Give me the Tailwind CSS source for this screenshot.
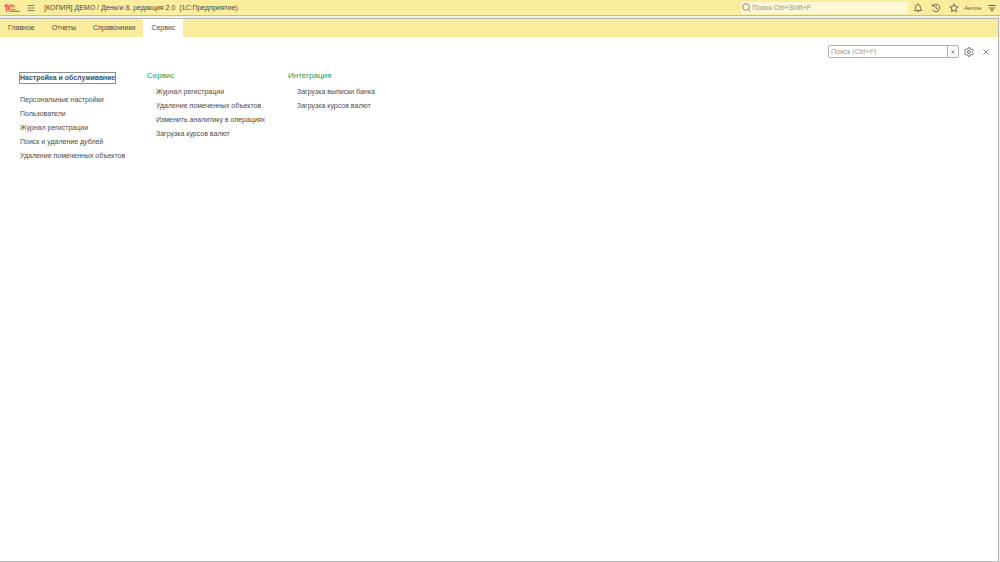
<!DOCTYPE html>
<html lang="ru">
<head>
<meta charset="utf-8">
<title>Деньги 8</title>
<script src="https://cdn.jsdelivr.net/npm/@tailwindcss/browser@4"></script>
</head>
<body class="flex h-screen flex-col overflow-hidden bg-white font-['Liberation_Sans',Arial,sans-serif] text-[7px] leading-[10px] text-[#4a4a4a]">
  <header class="flex h-4 shrink-0 items-center border-b border-[#c4bd8c] bg-[#fbed9e] pr-1 pl-1">
    <svg class="h-[10px] w-4 shrink-0" viewBox="0 0 16 10" fill="none" stroke="#e8554a" role="img" aria-label="1С">
      <path d="M.4 3.300 2.700 1.800V8.600" stroke-width="1.500"/>
      <path d="M10.600 4.200A3.100 3.100 0 1 0 7.600 8.300H15.600" stroke-width="1.200"/>
      <path d="M8.800 4.600A1.300 1.300 0 1 0 7.600 6.500H11.500" stroke-width=".9"/>
    </svg>
    <button class="ml-[7px] shrink-0" aria-label="Меню">
      <svg class="block h-2 w-2" viewBox="0 0 8 8" stroke="#6b6850" stroke-width=".8"><path d="M.5 1.500H7.500M.5 4H7.500M.5 6.500H7.500"/></svg>
    </button>
    <h1 class="ml-[9px] whitespace-pre">[КОПИЯ] ДЕМО / Деньги 8, редакция 2.0  (1С:Предприятие)</h1>
    <label class="ml-auto flex h-3 w-[167px] items-center gap-px bg-[#fef8d6] pl-px">
      <svg class="h-[9px] w-[9px] shrink-0" viewBox="0 0 9 9" fill="none" stroke="#77735a" stroke-width=".8"><circle cx="4" cy="4" r="3.300"/><path d="m6.400 6.400 2.200 2.200"/></svg>
      <input type="search" aria-label="Глобальный поиск" placeholder="Поиск Ctrl+Shift+F" class="min-w-0 flex-1 outline-none placeholder:text-[#98937a]">
    </label>
    <div class="ml-[5px] flex items-center gap-2 text-[#5b5843]">
      <button aria-label="Уведомления"><svg class="block h-[10px] w-[10px]" viewBox="0 0 10 10" fill="none" stroke="currentColor" stroke-width=".9"><path d="M1.300 7.400C2.600 6.400 2.500 5.200 2.700 4 2.900 2.300 3.800 1.500 5 1.500S7.100 2.300 7.300 4C7.500 5.200 7.400 6.400 8.700 7.400ZM5 .5V1.500"/><path d="M3.900 8.200H6.100L5 9.400Z" fill="currentColor" stroke="none"/></svg></button>
      <button aria-label="История"><svg class="block h-[10px] w-[10px]" viewBox="0 0 10 10" fill="none" stroke="currentColor" stroke-width=".9"><path d="M1.800 3A3.700 3.700 0 1 1 1.700 6.700M1 1.200 1.500 3.300 3.600 3M5 2.800V5.200L6.800 6.300"/></svg></button>
      <button aria-label="Избранное"><svg class="block h-[10px] w-[10px]" viewBox="0 0 10 10" fill="none" stroke="currentColor" stroke-width=".9"><path d="m5 .9 1.200 2.700 2.900.3-2.200 2 .6 2.900L5 7.300 2.500 8.800l.6-2.900-2.200-2 2.900-.3Z"/></svg></button>
      <div class="-ml-[3px] flex items-center gap-[7px]">
        <button class="text-[6px]">Антон</button>
        <button aria-label="Сервис и настройки"><svg class="block h-2 w-2" viewBox="0 0 8 8" stroke="currentColor" stroke-width=".9"><path d="M0 1.500H8M1 4H7"/><path d="M2.300 5.500H5.700L4 7.500Z" fill="currentColor" stroke="none"/></svg></button>
      </div>
    </div>
  </header>

  <div class="flex min-h-0 flex-1 bg-[#f2f2ec] pt-0.5 pr-px">
    <div class="flex min-w-0 flex-1 flex-col border-t border-r border-b border-[#b5b5b5] bg-white">
      <nav class="flex h-[18px] shrink-0 gap-px bg-[#fbeb9c]" aria-label="Разделы">
        <a href="#" class="flex items-center px-2">Главное</a>
        <a href="#" class="flex items-center px-2">Отчеты</a>
        <a href="#" class="flex items-center pl-2 pr-[7px]">Справочники</a>
        <a href="#" class="flex items-center bg-white px-2" aria-current="page">Сервис</a>
      </nav>
      <div class="mt-2 flex items-center justify-end pr-[9px]">
        <div class="flex h-[13px] w-[131px] rounded-[2px] border border-[#b0b0b0]">
          <input type="text" aria-label="Поиск по командам" placeholder="Поиск (Ctrl+F)" class="min-w-0 flex-1 pl-0.5 outline-none placeholder:text-[#9a9a9a]">
          <button class="flex w-[11px] items-center justify-center border-l border-[#b0b0b0]" aria-label="Очистить"><svg class="h-1 w-1" viewBox="0 0 4 4" stroke="#777" stroke-width=".8"><path d="m.5.5 3 3m0-3-3 3"/></svg></button>
        </div>
        <button class="ml-[5px]" aria-label="Настройка"><svg class="block h-[10px] w-[10px]" viewBox="0 0 10 10" fill="none" stroke="#666" stroke-width=".9"><path d="M4 .8H6L6.300 2 7.200 2.500 8.400 2.100 9.400 3.800 8.500 4.600V5.400L9.400 6.200 8.400 7.900 7.200 7.500 6.300 8 6 9.200H4L3.700 8 2.800 7.500 1.600 7.900.6 6.200 1.500 5.400V4.600L.6 3.800 1.600 2.100 2.800 2.500 3.700 2Z"/><circle cx="5" cy="5" r="1.500"/></svg></button>
        <button class="ml-[9px]" aria-label="Закрыть"><svg class="block h-[6px] w-[6px]" viewBox="0 0 6 6" stroke="#666" stroke-width=".8"><path d="m.5.5 5 5m0-5-5 5"/></svg></button>
      </div>
      <main class="mt-[13px] flex items-start pl-5">
        <section class="w-[127px]">
          <h2 class="mt-0.5"><a href="#" class="inline-block font-bold text-[#45505c] outline outline-[#8a8f96]">Настройка и обслуживание</a></h2>
          <ul class="mt-[10px] whitespace-nowrap leading-[14px]">
            <li><a href="#">Персональные настройки</a></li>
            <li><a href="#">Пользователи</a></li>
            <li><a href="#">Журнал регистрации</a></li>
            <li><a href="#">Поиск и удаление дублей</a></li>
            <li><a href="#">Удаление помеченных объектов</a></li>
          </ul>
        </section>
        <section class="w-[141px]">
          <h2 class="text-[8px] text-[#1f9a4c]">Сервис</h2>
          <ul class="mt-1 pl-[9px] whitespace-nowrap leading-[14px]">
            <li><a href="#">Журнал регистрации</a></li>
            <li><a href="#">Удаление помеченных объектов</a></li>
            <li><a href="#">Изменить аналитику в операциях</a></li>
            <li><a href="#">Загрузка курсов валют</a></li>
          </ul>
        </section>
        <section>
          <h2 class="text-[8px] text-[#1f9a4c]">Интеграция</h2>
          <ul class="mt-1 pl-[9px] whitespace-nowrap leading-[14px]">
            <li><a href="#">Загрузка выписки банка</a></li>
            <li><a href="#">Загрузка курсов валют</a></li>
          </ul>
        </section>
      </main>
    </div>
  </div>
</body>
</html>
